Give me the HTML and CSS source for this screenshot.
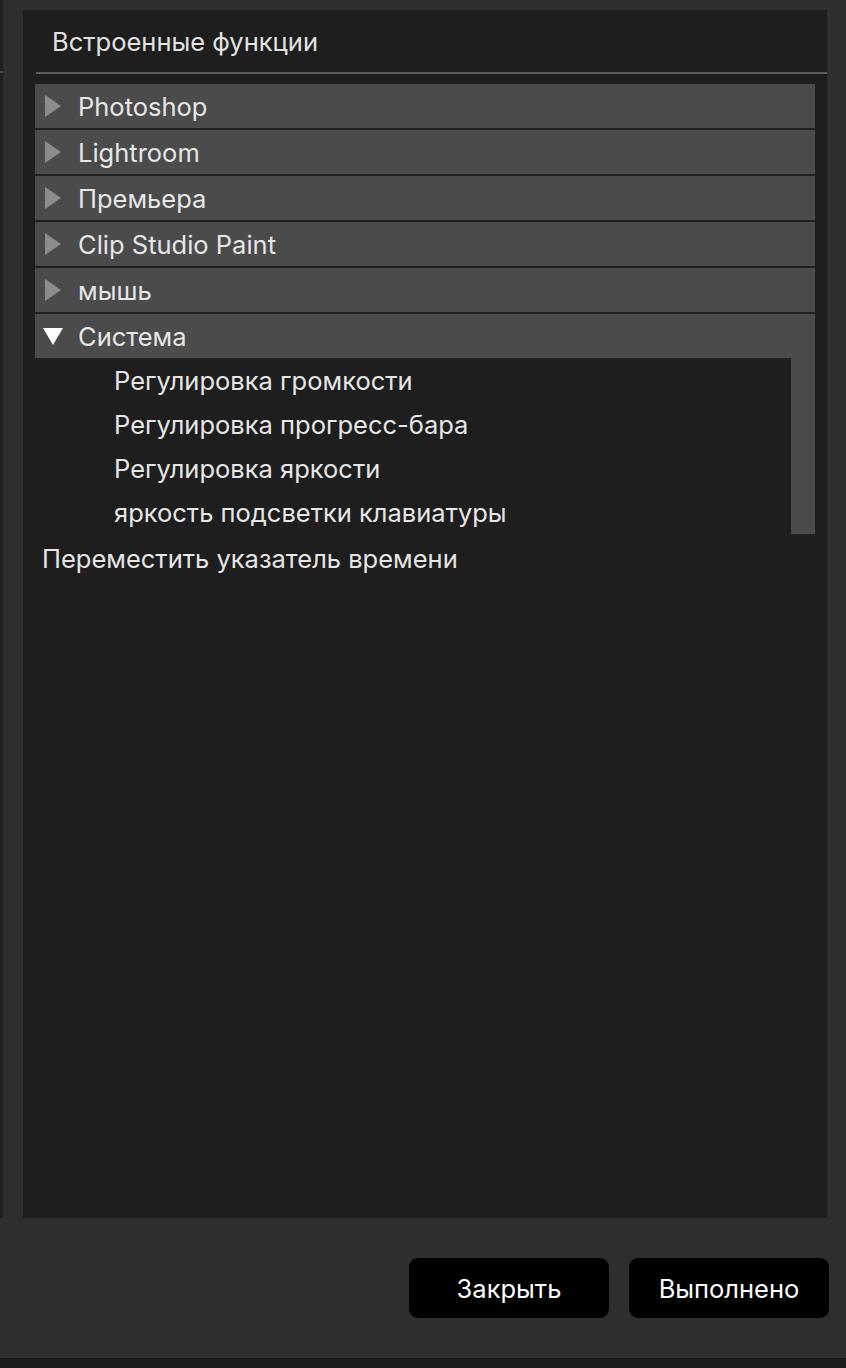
FILE: index.html
```html
<!DOCTYPE html>
<html lang="ru">
<head>
<meta charset="utf-8">
<link rel="stylesheet" href="styles.css">
</head>
<body>
<div class="window">
  <div class="main">
    <div class="side-strip"><div class="side-rule"></div></div>
    <section class="panel">
      <div class="panel-title">Встроенные функции</div>
      <div class="panel-rule"></div>
      <ul class="tree">
        <li class="group"><span class="tri closed"></span><span class="label">Photoshop</span></li>
        <li class="group"><span class="tri closed"></span><span class="label">Lightroom</span></li>
        <li class="group"><span class="tri closed"></span><span class="label">Премьера</span></li>
        <li class="group"><span class="tri closed"></span><span class="label">Clip Studio Paint</span></li>
        <li class="group"><span class="tri closed"></span><span class="label">мышь</span></li>
        <li class="group"><span class="tri open"></span><span class="label">Система</span></li>
        <li class="children">
          <ul class="child-list">
            <li class="child">Регулировка громкости</li>
            <li class="child">Регулировка прогресс-бара</li>
            <li class="child">Регулировка яркости</li>
            <li class="child">яркость подсветки клавиатуры</li>
          </ul>
          <div class="scroll-bar"></div>
        </li>
      </ul>
      <div class="loose-item">Переместить указатель времени</div>
    </section>
  </div>
  <footer class="footer">
    <button class="btn">Закрыть</button>
    <button class="btn">Выполнено</button>
  </footer>
  <div class="bottom-strip"></div>
</div>
</body>
</html>
```

FILE: styles.css
```css
* { box-sizing: border-box; }
html, body { margin: 0; padding: 0; }
body {
  background: #2e2e2e;
  font-family: Inter, "Noto Sans", "Liberation Sans", sans-serif;
  color: #e6e6e6;
  width: 846px;
  height: 1368px;
  overflow: hidden;
}
.window {
  display: flex;
  flex-direction: column;
  height: 1368px;
}
.main {
  display: flex;
  gap: 20px;
  height: 1218px;
}
.side-strip {
  width: 3px;
  background: #1f1f1f;
  padding-top: 71px;
}
.side-rule {
  height: 2px;
  background: #4a4a4a;
}
.panel {
  margin-top: 10px;
  width: 804px;
  background: #1e1e1e;
  display: flex;
  flex-direction: column;
}
.panel-title {
  height: 62px;
  padding-left: 29px;
  display: flex;
  align-items: center;
  font-size: 25.5px;
  color: #e2e2e2;
}
.panel-rule {
  height: 2px;
  margin-left: 13px;
  background: #5a5a5a;
}
.tree {
  list-style: none;
  margin: 10px 12px 0 12px;
  padding: 0;
}
.group {
  height: 44px;
  margin-bottom: 2px;
  background: #4b4b4b;
  display: flex;
  align-items: center;
  font-size: 25.5px;
}
.tri {
  width: 0;
  height: 0;
  margin-left: 10px;
  margin-right: 17px;
}
.tri.closed {
  border-top: 11px solid transparent;
  border-bottom: 11px solid transparent;
  border-left: 16px solid #8c8c8c;
}
.tri.open {
  margin-left: 8px;
  margin-right: 15px;
  border-left: 10px solid transparent;
  border-right: 10px solid transparent;
  border-top: 17px solid #ffffff;
}
.children {
  display: flex;
  margin-top: -2px;
}
.child-list {
  list-style: none;
  margin: 0;
  padding: 0;
  flex: 1;
  background: #1e1e1e;
}
.child {
  height: 44px;
  display: flex;
  align-items: center;
  padding-left: 79px;
  font-size: 25.5px;
}
.scroll-bar {
  width: 24px;
  background: #4b4b4b;
}
.loose-item {
  height: 48px;
  display: flex;
  align-items: center;
  padding-left: 19px;
  font-size: 25.5px;
}
.footer {
  display: flex;
  justify-content: flex-end;
  gap: 20px;
  padding: 40px 17px 0 0;
  height: 140px;
}
.btn {
  width: 200px;
  height: 60px;
  border: 0;
  border-radius: 9px;
  background: #000;
  color: #fff;
  font-family: Inter, "Noto Sans", "Liberation Sans", sans-serif;
  font-size: 25.5px;
}
.bottom-strip {
  height: 10px;
  background: #1c1c1c;
}
```
